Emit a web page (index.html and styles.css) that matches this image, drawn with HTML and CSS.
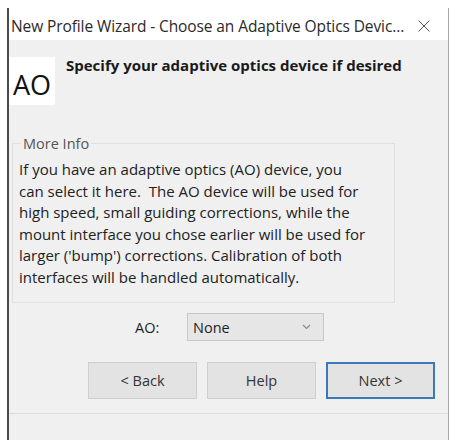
FILE: index.html
```html
<!doctype html>
<html lang="en">

<head>
  <meta charset="utf-8" />
  <title>New Profile Wizard</title>
  <link rel="stylesheet" href="styles.css">
</head>

<body>
  <div class="window">
    <div class="titlebar">
      <span class="title">New Profile Wizard - Choose an Adaptive Optics Devic...</span>
      <svg class="close" width="12" height="12" viewBox="0 0 12 12"><path d="M0.5 0.5 L11.5 11.5 M11.5 0.5 L0.5 11.5" stroke="#555" stroke-width="1"/></svg>
    </div>

    <div class="header">
      <div class="badge">AO</div>
      <h1 class="page-title">Specify your adaptive optics device if desired</h1>
    </div>

    <fieldset class="info">
      <legend>More Info</legend>
      <p>If you have an adaptive optics (AO) device, you<br>
        can select it here.&nbsp; The AO device will be used for<br>
        high speed, small guiding corrections, while the<br>
        mount interface you chose earlier will be used for<br>
        larger ('bump') corrections. Calibration of both<br>
        interfaces will be handled automatically.</p>
    </fieldset>

    <div class="ao-row">
      <label for="ao">AO:</label>
      <div class="combo" id="ao">
        <span>None</span>
        <svg width="9" height="6" viewBox="0 0 9 6"><path d="M1 1 L4.5 4.5 L8 1" fill="none" stroke="#888" stroke-width="1.1"/></svg>
      </div>
    </div>

    <div class="buttons">
      <button>&lt; Back</button>
      <button>Help</button>
      <button class="default">Next &gt;</button>
    </div>

    <div class="footer"></div>
  </div>
</body>

</html>
```

FILE: styles.css
```css
html,
body {
  height: 100%;
  margin: 0;
}

body {
  background-color: #fff;
  font-family: "Open Sans", "Noto Sans", sans-serif;
  color: #1e1e1e;
  overflow: hidden;
}

.window {
  margin: 8px 0 0 7px;
  width: 439px;
  height: 432px;
  border-left: 2px solid #4a4a4a;
  border-right: 1px solid #a8a8a8;
  background-color: #f0f0f0;
  display: flex;
  flex-direction: column;
}

.titlebar {
  height: 32px;
  background-color: #fff;
  display: flex;
  align-items: center;
  padding: 4px 0 0 2px;
  box-sizing: border-box;
}

.title {
  font-size: 15.5px;
  color: #2a2a2a;
  white-space: nowrap;
  letter-spacing: -0.1px;
}

.close {
  margin-left: 14px;
  flex: none;
}

.header {
  display: flex;
  align-items: flex-start;
  padding-top: 17px;
}

.badge {
  width: 46px;
  height: 48px;
  background-color: #fff;
  font-size: 27px;
  line-height: 56px;
  text-indent: 4px;
  color: #111;
}

.page-title {
  margin: -2px 0 0 11px;
  font-size: 15px;
  font-weight: bold;
  color: #1a1a1a;
  white-space: nowrap;
}

.info {
  margin: 29px 0 0 3px;
  width: 383px;
  height: 169px;
  box-sizing: border-box;
  border: 1px solid #e0e0e0;
  padding: 0 0 0 6px;
}

.info legend {
  padding: 0 2px;
  margin-left: 2px;
  font-size: 14.5px;
  color: #555;
}

.info p {
  margin: 6px 0 0 0;
  font-size: 15px;
  line-height: 21.6px;
  color: #222;
  white-space: nowrap;
}

.ao-row {
  display: flex;
  align-items: center;
  margin-top: 10px;
  padding-left: 126px;
}

.ao-row label {
  font-size: 14.5px;
  width: 52px;
}

.combo {
  width: 137px;
  height: 28px;
  border: 1px solid #c8c8c8;
  background-color: #e6e6e6;
  display: flex;
  align-items: center;
  justify-content: space-between;
  padding: 0 12px 0 5px;
  box-sizing: border-box;
  font-size: 14.5px;
}

.buttons {
  display: flex;
  gap: 10px;
  margin-top: 21px;
  padding-left: 79px;
}

.buttons button {
  width: 109px;
  height: 37px;
  border: 1px solid #cfcfcf;
  background-color: #e3e3e3;
  font-family: inherit;
  font-size: 14.5px;
  color: #333;
}

.buttons .default {
  border: 2px solid #3a7ab8;
}

.footer {
  margin-top: 14px;
  border-top: 1px solid #dcdcdc;
  flex: 1;
}
```
